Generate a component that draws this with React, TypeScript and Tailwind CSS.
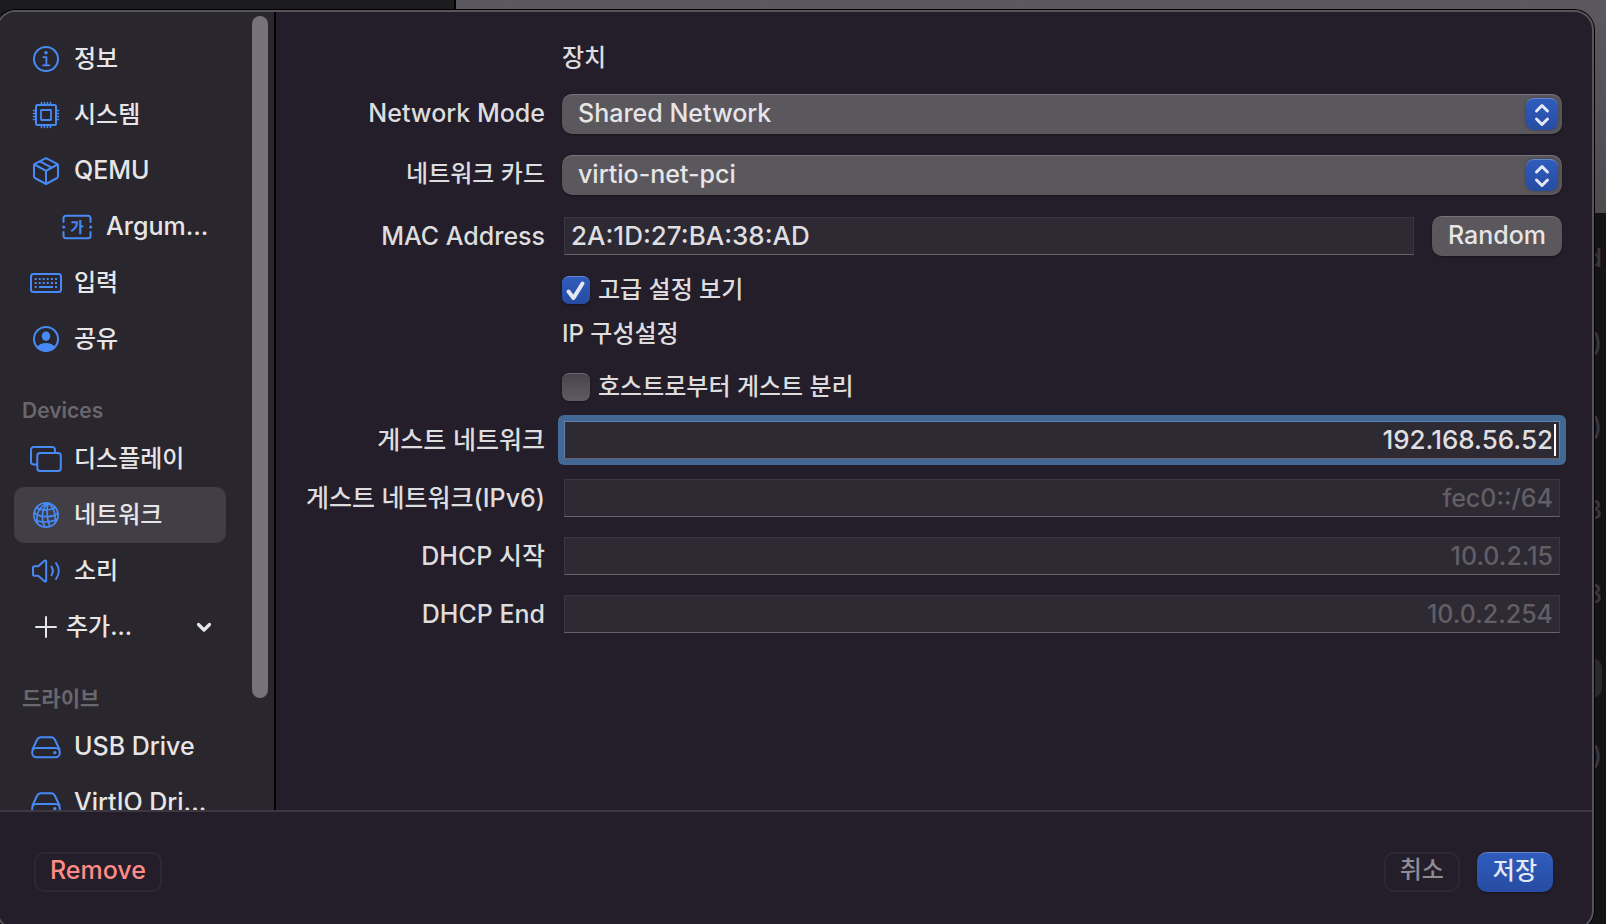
import React from "react";
import clsx from "clsx";

type IconProps = { children: React.ReactNode };

const Icon = ({ children }: IconProps) => (
  <svg
    viewBox="0 0 32 32"
    className="size-8 shrink-0"
    fill="none"
    stroke="currentColor"
    strokeWidth={2}
    strokeLinecap="round"
    strokeLinejoin="round"
    aria-hidden="true"
  >
    {children}
  </svg>
);

const InfoIcon = () => (
  <Icon>
    <circle cx="16" cy="16" r="12" />
    <circle cx="16" cy="9.8" r="1.8" fill="currentColor" stroke="none" />
    <path d="M13.4 14.2h3v8.2M13 22.4h6.4" strokeWidth={1.8} />
  </Icon>
);

const CpuIcon = () => (
  <Icon>
    <rect x="6" y="6" width="20" height="20" rx="1.5" />
    <rect x="11" y="11" width="10" height="10" rx="0.5" strokeWidth={1.8} />
    <path
      d="M11.5 3.5V6M14.5 3.5V6M17.5 3.5V6M20.5 3.5V6M11.5 26v2.5M14.5 26v2.5M17.5 26v2.5M20.5 26v2.5M3.5 11.5H6M3.5 14.5H6M3.5 17.5H6M3.5 20.5H6M26 11.5h2.5M26 14.5h2.5M26 17.5h2.5M26 20.5h2.5"
      strokeWidth={1.6}
    />
  </Icon>
);

const BoxIcon = () => (
  <Icon>
    <path d="M16 3.2 27.2 8.8a1.6 1.6 0 0 1 .8 1.4v11.4a1.6 1.6 0 0 1-.8 1.4L16 29 4.8 23a1.6 1.6 0 0 1-.8-1.4V10.2a1.6 1.6 0 0 1 .8-1.4Z" />
    <path d="M4.5 9.5 16 15.8 27.5 9.5M16 15.8V28.5M10 6.4l11.5 6.2" />
  </Icon>
);

const ArgumentIcon = () => (
  <Icon>
    <path d="M1.5 11V7a2.2 2.2 0 0 1 2.2-2.2h22.6A2.2 2.2 0 0 1 28.5 7v4M1.5 21v4a2.2 2.2 0 0 0 2.2 2.2h22.6a2.2 2.2 0 0 0 2.2-2.2v-4" />
    <circle cx="1.7" cy="16" r="1.6" fill="currentColor" stroke="none" />
    <circle cx="28.7" cy="16" r="1.6" fill="currentColor" stroke="none" />
    <text
      x="15"
      y="21"
      textAnchor="middle"
      fontSize="14"
      fontFamily="'Noto Sans CJK KR', sans-serif"
      fill="currentColor"
      strokeWidth={0.5}
    >
      가
    </text>
  </Icon>
);

const KEY_COLUMNS = [5.7, 9.7, 13.7, 17.7, 21.9, 26];

const KeyboardIcon = () => (
  <Icon>
    <rect x="1" y="7" width="30" height="18" rx="2.5" />
    {KEY_COLUMNS.map((x) => (
      <path
        key={x}
        d={`M${x - 1} 11.9h2M${x - 1} 15.9h2`}
        strokeLinecap="butt"
      />
    ))}
    <path d="M4.7 20.1h2M9 20.1h14M25 20.1h2" strokeLinecap="butt" />
  </Icon>
);

const PersonIcon = () => (
  <Icon>
    <circle cx="16" cy="16" r="12" />
    <ellipse cx="16" cy="13.2" rx="4.2" ry="4.8" fill="currentColor" stroke="none" />
    <path
      d="M7 24.3c1.6-2.9 5-4.3 9-4.3s7.4 1.4 9 4.3A12 12 0 0 1 7 24.3Z"
      fill="currentColor"
      stroke="none"
    />
  </Icon>
);

const DisplayIcon = () => (
  <Icon>
    <path d="M7 21.5H3.8A2.8 2.8 0 0 1 1 18.7V6.8A2.8 2.8 0 0 1 3.8 4h18.4A2.8 2.8 0 0 1 25 6.8V9" />
    <rect x="7.3" y="10" width="23.5" height="18" rx="2.8" />
  </Icon>
);

const NetworkIcon = () => (
  <Icon>
    <g strokeWidth={1.7}>
      <circle cx="16" cy="16" r="12.1" />
      <path d="M17 4.3C10.5 7.5 5.5 14 7.3 23.5M17.5 4.3c-5 5-7 14-3 23.3M18 4.3c-1.5 7-1 16 1.7 23M18.5 4.3c5 4 7.5 11 6.5 19" />
      <path d="M6.500 8.700c5.500 3.300 13 3.500 18.500-.5M4.200 14c6 4.500 17 5.200 23.700.2M5.500 21.500c6.500 2 14.500 2 21.500-1" />
    </g>
  </Icon>
);

const SoundIcon = () => (
  <Icon>
    <path d="M3 12.5a1.2 1.2 0 0 1 1.2-1.2h4L14.5 5.8c.8-.7 1.7-.3 1.7.7v19c0 1-.9 1.4-1.7.7l-6.3-5.500h-4A1.2 1.2 0 0 1 3 19.5Z" />
    <path d="M21.5 11.8c1.7 2.6 1.7 5.8 0 8.4M26 8c3.6 4.9 3.6 11.1 0 16" />
  </Icon>
);

const DriveIcon = () => (
  <Icon>
    <path d="M2.5 18.5 7.3 8.3A3.5 3.5 0 0 1 10.5 6.2h11a3.5 3.5 0 0 1 3.2 2.1l4.800 10.200" />
    <rect x="2.2" y="17" width="27.6" height="9.2" rx="4.2" />
    <circle cx="24.8" cy="21.6" r="1.7" fill="currentColor" stroke="none" />
  </Icon>
);

const LATIN = "text-[25px]";
const HANGUL = "text-[24px]";

type NavItemProps = {
  icon: React.ReactNode;
  label: string;
  size?: string;
  active?: boolean;
  nested?: boolean;
};

const NavItem = ({ icon, label, size = HANGUL, active, nested }: NavItemProps) => (
  <a
    href="#"
    aria-current={active ? "page" : undefined}
    className={clsx(
      "flex h-14 shrink-0 items-center gap-3 rounded-[10px] whitespace-nowrap text-[#e6e5e7]",
      nested ? "pl-12" : "pl-4",
      active && "bg-[#413e45]",
      size
    )}
  >
    <span className="text-[#478af6]">{icon}</span>
    {label}
  </a>
);

const NavHeading = ({ children }: { children: React.ReactNode }) => (
  <h2 className="flex h-16 shrink-0 items-end pb-1 pl-2 text-[21px] leading-8 font-[580] text-[#69666e]">
    {children}
  </h2>
);

const Sidebar = () => (
  <aside className="relative w-[278px] shrink-0 overflow-hidden border-r-2 border-black bg-[#29262d]">
    <nav className="mr-12 ml-4 flex flex-col pt-[19px]">
      <NavItem icon={<InfoIcon />} label="정보" />
      <NavItem icon={<CpuIcon />} label="시스템" />
      <NavItem icon={<BoxIcon />} label="QEMU" size={LATIN} />
      <NavItem icon={<ArgumentIcon />} label="Argum..." size={LATIN} nested />
      <NavItem icon={<KeyboardIcon />} label="입력" />
      <NavItem icon={<PersonIcon />} label="공유" />

      <NavHeading>Devices</NavHeading>
      <NavItem icon={<DisplayIcon />} label="디스플레이" />
      <NavItem icon={<NetworkIcon />} label="네트워크" active />
      <NavItem icon={<SoundIcon />} label="소리" />
      <button
        type="button"
        className="flex h-14 shrink-0 items-center pr-3 pl-4 text-[24px] text-[#e6e5e7]"
      >
        <Icon>
          <path d="M16 6v20M6 16h20" />
        </Icon>
        <span className="ml-1">추가...</span>
        <svg
          viewBox="0 0 20 20"
          className="ml-auto size-5"
          fill="none"
          stroke="currentColor"
          strokeWidth={3.2}
          strokeLinecap="round"
          strokeLinejoin="round"
          aria-hidden="true"
        >
          <path d="m4.500 7.500 5.500 5.500 5.500-5.500" />
        </svg>
      </button>

      <NavHeading>드라이브</NavHeading>
      <NavItem icon={<DriveIcon />} label="USB Drive" size={LATIN} />
      <NavItem icon={<DriveIcon />} label="VirtIO Dri..." size={LATIN} />
    </nav>
    <div className="absolute top-1 right-1.5 bottom-28 w-4 rounded-full bg-[#757379]" />
  </aside>
);

type FieldProps = {
  id: string;
  label: string;
  className?: string;
  children: React.ReactNode;
};

const Field = ({ id, label, className = LATIN, children }: FieldProps) => (
  <>
    <label
      htmlFor={id}
      className={clsx("self-center text-right leading-8 whitespace-nowrap", className)}
    >
      {label}
    </label>
    {children}
  </>
);

const Select = ({ id, value }: { id: string; value: string }) => (
  <div className="relative mb-px">
    <select
      id={id}
      defaultValue={value}
      className="block h-10 w-full appearance-none rounded-[10px] border-t border-[#77747b] bg-[#5a575d] pb-1 pl-4 text-[25px] leading-8 text-[#e6e5e7] shadow-[0_1px_2px_#0006] outline-none"
    >
      <option>{value}</option>
    </select>
    <span className="pointer-events-none absolute top-1 right-1 flex size-8 items-center justify-center rounded-lg border-t border-[#6485cf] bg-linear-to-b from-[#2f5cbd] to-[#274ca2] shadow-[0_0_3px_#0005]">
      <svg
        viewBox="0 0 32 32"
        className="size-8"
        fill="none"
        stroke="#e4e8f5"
        strokeWidth={3}
        strokeLinecap="round"
        strokeLinejoin="round"
        aria-hidden="true"
      >
        <path d="m10.500 12 5.500-5.500 5.500 5.500M10.500 20l5.500 5.500 5.500-5.500" />
      </svg>
    </span>
  </div>
);

const INPUT =
  "block h-[38px] w-full min-w-0 rounded-none border border-[#3a3741] border-b-[#65626a] bg-[#2d2a33] px-1.5 pb-0.5 text-[26px] leading-8 font-medium text-[#dfdee0] placeholder:text-[25px] placeholder:text-[#615e66] outline-none";

const Checkbox = ({ label, checked }: { label: string; checked?: boolean }) => (
  <label className="col-start-2 flex h-7 items-center gap-2 text-[24px] leading-7">
    <span className="relative size-7 shrink-0">
      <input
        type="checkbox"
        defaultChecked={checked}
        className="peer block size-7 appearance-none rounded-[7px] border-t border-[#6a676e] bg-linear-to-b from-[#48454b] to-[#5f5c63] shadow-[0_1px_2px_#0006] checked:border-[#6485cf] checked:from-[#2f5cbd] checked:to-[#274ca2]"
      />
      <svg
        viewBox="0 0 28 28"
        className="pointer-events-none absolute inset-0 hidden size-7 peer-checked:block"
        fill="none"
        stroke="#e4e8f5"
        strokeWidth={4}
        strokeLinecap="round"
        strokeLinejoin="round"
        aria-hidden="true"
      >
        <path d="m6.500 15.500 5 6.500L20.500 7.500" />
      </svg>
    </span>
    {label}
  </label>
);

const NetworkSettings = () => (
  <main className="min-w-0 flex-1 overflow-hidden pt-[30px] pr-[30px] text-[#dddcde]">
    <form className="grid grid-cols-[269px_minmax(0,1fr)] gap-x-[17px] gap-y-5">
      <h2 className="col-start-2 text-[24px] leading-8">장치</h2>

      <Field id="mode" label="Network Mode" className="pb-1 text-[25px]">
        <Select id="mode" value="Shared Network" />
      </Field>
      <Field id="card" label="네트워크 카드" className="pb-1 text-[24px]">
        <Select id="card" value="virtio-net-pci" />
      </Field>
      <Field id="mac" label="MAC Address">
        <div className="ml-0.5 flex items-center gap-[18px]">
          <input id="mac" className={INPUT} defaultValue="2A:1D:27:BA:38:AD" />
          <button
            type="button"
            className="h-10 shrink-0 rounded-[10px] border-t border-[#77747b] bg-[#5a575d] px-4 pb-1 text-[25px] leading-8 text-[#e6e5e7] shadow-[0_1px_2px_#0006]"
          >
            Random
          </button>
        </div>
      </Field>

      <Checkbox label="고급 설정 보기" checked />
      <h2 className="col-start-2 mb-[9px] text-[24px] leading-5">IP 구성설정</h2>
      <Checkbox label="호스트로부터 게스트 분리" />

      <Field id="guest" label="게스트 네트워크">
        <div className="relative -mx-1 -my-1.5 rounded-md bg-[#436894] p-1.5">
          <input
            id="guest"
            className={clsx(INPUT, "border-[#5f81ad] border-b-[#7d97bb] text-right")}
            defaultValue="192.168.56.52"
          />
          <span className="absolute top-[9px] right-2.5 h-8 w-0.5 bg-white" />
        </div>
      </Field>
      <Field id="guest6" label="게스트 네트워크(IPv6)">
        <div className="mx-0.5">
          <input id="guest6" className={clsx(INPUT, "text-right")} placeholder="fec0::/64" />
        </div>
      </Field>
      <Field id="dhcp-start" label="DHCP 시작">
        <div className="mx-0.5">
          <input id="dhcp-start" className={clsx(INPUT, "text-right")} placeholder="10.0.2.15" />
        </div>
      </Field>
      <Field id="dhcp-end" label="DHCP End">
        <div className="mx-0.5">
          <input id="dhcp-end" className={clsx(INPUT, "text-right")} placeholder="10.0.2.254" />
        </div>
      </Field>
    </form>
  </main>
);

const Footer = () => (
  <footer className="flex shrink-0 items-center border-t-2 border-[#3c3741] pt-10 pr-[39px] pb-9 pl-9 leading-8">
    <button
      type="button"
      className="h-10 rounded-[10px] border-2 border-[#2d2834] px-3.5 pb-1 text-[25px] text-[#ff8a86]"
    >
      Remove
    </button>
    <button
      type="button"
      className="ml-auto h-10 rounded-[10px] border-2 border-[#2d2834] px-3.5 pb-1 text-[24px] text-[#8f8c93]"
    >
      취소
    </button>
    <button
      type="button"
      className="ml-[17px] h-10 rounded-[10px] border-t border-[#6485cf] bg-linear-to-b from-[#2f5cbd] to-[#274ca2] px-4 pb-1 text-[24px] text-[#e4e8f5] shadow-[0_1px_2px_#0006]"
    >
      저장
    </button>
  </footer>
);

// The dimmed window underneath; only its edges show around the sheet.
const Backdrop = () => (
  <div className="absolute inset-0 bg-[#141317] text-right text-[25px] text-[#39373c]" aria-hidden="true">
    <div className="flex h-[213px]">
      <div className="w-[456px] border-r-2 border-black bg-[#1c1b1e]" />
      <div className="flex-1 bg-linear-to-b from-[#5b595f] to-[#4d4b50]" />
    </div>
    <ul className="flex flex-col items-end pt-[3px] pr-1 leading-[84px]">
      <li>d</li>
      <li>)</li>
      <li>)</li>
      <li>B</li>
      <li>B</li>
      <li className="my-[22px] h-10 w-12 rounded-[10px] bg-[#2a292d]" />
      <li className="leading-[70px]">)</li>
    </ul>
  </div>
);

const App = () => (
  <div
    lang="ko"
    className="relative h-screen overflow-hidden font-['Inter','Noto_Sans_CJK_KR',sans-serif] font-medium"
  >
    <Backdrop />
    <div className="relative mt-2.5 mr-3 -ml-1 flex h-[calc(100vh-4px)] flex-col overflow-hidden rounded-[20px] border-2 border-[#57535b] bg-[#231e29] shadow-[0_0_0_1px_#000]">
      <div className="flex min-h-0 flex-1">
        <Sidebar />
        <NetworkSettings />
      </div>
      <Footer />
    </div>
  </div>
);

export default App;
